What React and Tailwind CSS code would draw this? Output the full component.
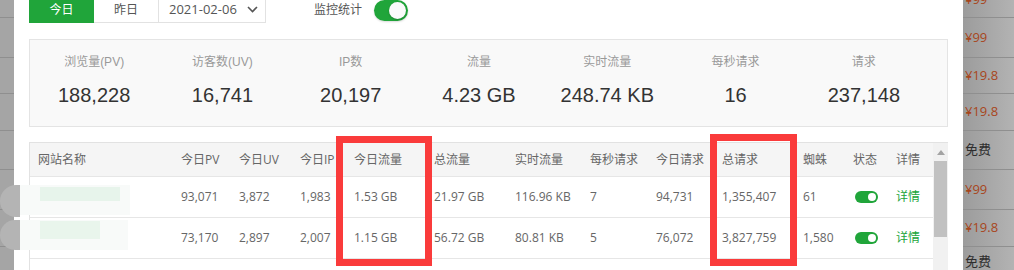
import React from "react";

const bgRows = [
  { h: 18, price: "¥99", top: true },
  { h: 40, price: "¥99" },
  { h: 36, price: "¥19.8" },
  { h: 37, price: "¥19.8" },
  { h: 39, price: "免费" },
  { h: 40, price: "¥99" },
  { h: 37, price: "¥19.8" },
  { h: 30, price: "免费" },
];

const stats = [
  { label: "浏览量(PV)", value: "188,228" },
  { label: "访客数(UV)", value: "16,741" },
  { label: "IP数", value: "20,197" },
  { label: "流量", value: "4.23 GB" },
  { label: "实时流量", value: "248.74 KB" },
  { label: "每秒请求", value: "16" },
  { label: "请求", value: "237,148" },
];

const headers = [
  "网站名称",
  "今日PV",
  "今日UV",
  "今日IP",
  "今日流量",
  "总流量",
  "实时流量",
  "每秒请求",
  "今日请求",
  "总请求",
  "蜘蛛",
  "状态",
  "详情",
];

const rows = [
  ["", "93,071", "3,872", "1,983", "1.53 GB", "21.97 GB", "116.96 KB", "7", "94,731", "1,355,407", "61"],
  ["", "73,170", "2,897", "2,007", "1.15 GB", "56.72 GB", "80.81 KB", "5", "76,072", "3,827,759", "1,580"],
];

const cols =
  "grid grid-cols-[143px_58px_61px_54px_80px_81px_75px_66px_66px_81px_50px_43px_45px]";

function BgStrip({ showPrice }) {
  return (
    <div className="flex flex-col">
      {bgRows.map((r, i) => (
        <div
          key={i}
          style={{ height: r.h }}
          className={
            r.top
              ? "flex items-start border-b border-[#8f8f8f] pl-[2px]"
              : "flex items-center border-b border-[#8f8f8f] pl-[2px]"
          }
        >
          {showPrice && (
            <span
              className={
                (r.price === "免费" ? "text-[#2e2e2e]" : "text-[#a8461c]") +
                (r.top ? " -mt-[10px] text-[13px]" : " text-[13px]")
              }
            >
              {r.price}
            </span>
          )}
        </div>
      ))}
    </div>
  );
}

function Toggle({ small }) {
  if (small) {
    return (
      <div className="w-[23px] h-[12px] rounded-full bg-[#20a53a] flex items-center justify-end pr-[2px]">
        <div className="w-[8px] h-[8px] rounded-full bg-white" />
      </div>
    );
  }
  return (
    <div className="w-[34px] h-[21px] rounded-full bg-[#20a53a] flex items-center justify-end pr-[2px] shadow-[0_1px_2px_rgba(0,0,0,0.15)]">
      <div className="w-[17px] h-[17px] rounded-full bg-[#fafafa] shadow-[0_1px_2px_rgba(0,0,0,0.2)]" />
    </div>
  );
}

export default function App() {
  return (
    <div
      className="relative flex h-[270px] w-[1014px] overflow-hidden bg-[#a6a6a6]"
      style={{ fontFamily: '"Open Sans", "Noto Sans CJK SC", sans-serif' }}
    >
      {/* overlay: page behind */}
      <div className="w-[14px] shrink-0 bg-[#a5a5a5]">
        <BgStrip />
      </div>

      {/* MODAL */}
      <div className="w-[949px] shrink-0 bg-white px-[15px]">
        {/* TOP BAR */}
        <div className="flex items-center -mt-[4px]">
          <div className="flex h-[27px] text-[12px]">
            <div className="w-[65px] flex items-center justify-center bg-[#20a53a] text-white">
              今日
            </div>
            <div className="w-[65px] flex items-center justify-center border border-l-0 border-[#e2e2e2] text-[#555]">
              昨日
            </div>
            <div className="w-[107px] flex items-center border border-l-0 border-[#e2e2e2] pl-[10px] text-[#555] text-[13px]">
              <span>2021-02-06</span>
              <svg
                className="ml-[10px]"
                width="11"
                height="7"
                viewBox="0 0 11 7"
                fill="none"
                stroke="#555"
                strokeWidth="1.6"
              >
                <path d="M1 1l4.5 4.5L10 1" />
              </svg>
            </div>
          </div>
          <span className="ml-[48px] text-[12px] text-[#555]">监控统计</span>
          <div className="ml-[12px] mt-[2px]">
            <Toggle />
          </div>
        </div>

        {/* STATS */}
        <div className="mt-[16px] h-[88px] border border-[#e4e4e4] bg-[#f9f9f9] pr-[19px]">
          <div
            className="grid grid-cols-7 pt-[14px]"
            style={{ fontFamily: '"Liberation Sans", "Noto Sans CJK SC", sans-serif' }}
          >
            {stats.map((s) => (
              <div key={s.label} className="flex flex-col items-center">
                <span className="text-[12px] leading-[16px] text-[#999]">{s.label}</span>
                <span className="mt-[14px] text-[20px] leading-[22px] text-[#333]">
                  {s.value}
                </span>
              </div>
            ))}
          </div>
        </div>

        {/* TABLE */}
        <div className="mt-[15px] flex border-l border-t border-[#e2e2e2] text-[12px] text-[#666]">
          <div className="w-[903px]">
            <div className={`${cols} h-[34px] items-center bg-[#f5f5f5] border-b border-[#e6e6e6]`}>
              {headers.map((h) => (
                <div key={h} className="pl-[8px] whitespace-nowrap">
                  {h}
                </div>
              ))}
            </div>
            {rows.map((r, i) => (
              <div key={i} className={`${cols} h-[41px] items-center border-b border-[#e6e6e6]`}>
                {r.map((c, j) => (
                  <div key={j} className="pl-[8px] whitespace-nowrap">
                    {c}
                  </div>
                ))}
                <div className="pl-[10px]">
                  <Toggle small />
                </div>
                <div className="pl-[8px] text-[#20a53a]">详情</div>
              </div>
            ))}
            <div className="h-[20px]" />
          </div>
          {/* scrollbar */}
          <div className="w-[17px] bg-[#f1f1f1] flex flex-col items-center">
            <svg className="mt-[7px]" width="8" height="5" viewBox="0 0 8 5">
              <path d="M0 5L4 0L8 5Z" fill="#a3a3a3" />
            </svg>
            <div className="mt-[6px] w-[13px] h-[76px] bg-[#c1c1c1]" />
          </div>
        </div>
      </div>

      <div className="flex-1 bg-gradient-to-r from-[#9c9c9c] to-[#b3b3b3]">
        <BgStrip showPrice />
      </div>

      {/* redacted site names */}
      <div className="absolute left-0 top-[185px] w-[20px] h-[32px] rounded-l-full bg-[#b4b4b4]" />
      <div className="absolute left-0 top-[220px] w-[20px] h-[30px] rounded-l-full bg-[#b4b4b4]" />
      <div className="absolute left-[20px] top-[185px] w-[110px] h-[30px] bg-[#f8faf9]" />
      <div className="absolute left-[40px] top-[187px] w-[80px] h-[14px] bg-[#e7f4eb]" />
      <div className="absolute left-[20px] top-[220px] w-[108px] h-[30px] bg-[#f8faf9]" />
      <div className="absolute left-[40px] top-[221px] w-[60px] h-[18px] bg-[#e9f5ec]" />

      {/* red highlight boxes */}
      <div className="absolute left-[336px] top-[136px] w-[96px] h-[130px] border-[7px] border-[#fa3b3b]" />
      <div className="absolute left-[710px] top-[134px] w-[87px] h-[132px] border-[7px] border-[#fa3b3b]" />
    </div>
  );
}
